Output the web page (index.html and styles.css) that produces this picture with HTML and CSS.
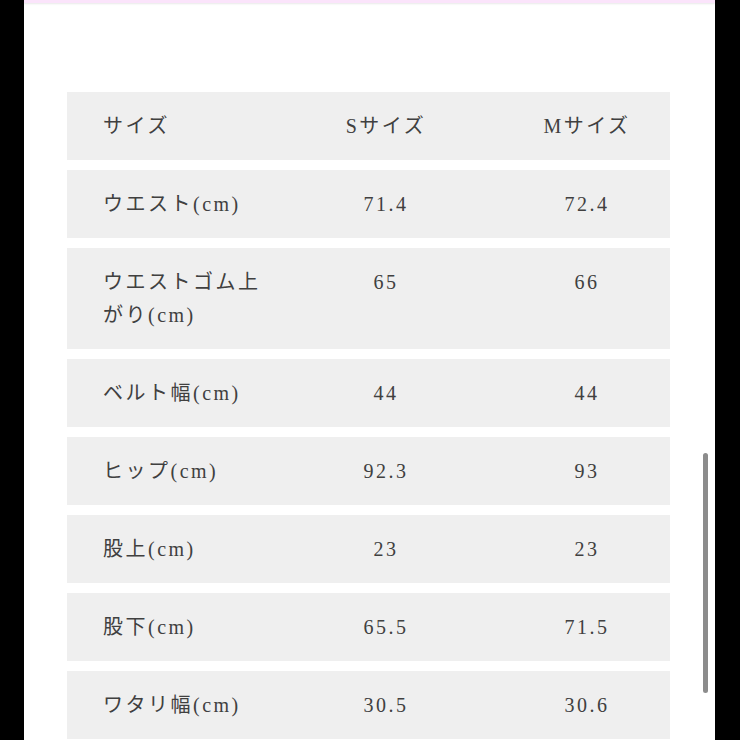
FILE: index.html
```html
<!DOCTYPE html>
<html lang="ja">
<head>
<meta charset="utf-8">
<link rel="stylesheet" href="styles.css">
</head>
<body>
<div class="screen">
  <div class="topline"></div>
  <div class="table">
    <div class="row"><div class="c1">サイズ</div><div class="c2">Sサイズ</div><div class="c3">Mサイズ</div></div>
    <div class="row"><div class="c1">ウエスト(cm)</div><div class="c2">71.4</div><div class="c3">72.4</div></div>
    <div class="row"><div class="c1">ウエストゴム上がり(cm)</div><div class="c2">65</div><div class="c3">66</div></div>
    <div class="row"><div class="c1">ベルト幅(cm)</div><div class="c2">44</div><div class="c3">44</div></div>
    <div class="row"><div class="c1">ヒップ(cm)</div><div class="c2">92.3</div><div class="c3">93</div></div>
    <div class="row"><div class="c1">股上(cm)</div><div class="c2">23</div><div class="c3">23</div></div>
    <div class="row"><div class="c1">股下(cm)</div><div class="c2">65.5</div><div class="c3">71.5</div></div>
    <div class="row"><div class="c1">ワタリ幅(cm)</div><div class="c2">30.5</div><div class="c3">30.6</div></div>
  </div>
  <div class="scrollbar"></div>
</div>
</body>
</html>
```

FILE: styles.css
```css
html, body {
  margin: 0;
  padding: 0;
  height: 740px;
  overflow: hidden;
  background: #000;
}
.screen {
  position: relative;
  margin: 0 25px 0 24px;
  height: 740px;
  background: #fff;
  overflow: hidden;
}
.topline {
  height: 3px;
  background: #fbe4fb;
  box-shadow: 0 1px 2px rgba(200, 200, 200, 0.4);
}
.table {
  display: flex;
  flex-direction: column;
  gap: 10px;
  margin: 89px 45px 0 43px;
}
.row {
  display: grid;
  grid-template-columns: 165px 236px 1fr;
  padding: 18px 0 17px 36px;
  background: #efefef;
  font-family: "Liberation Serif", "Noto Sans CJK JP", serif;
  font-size: 20px;
  line-height: 33px;
  letter-spacing: 2.5px;
  color: #404040;
}
.c2, .c3 {
  text-align: center;
}
.scrollbar {
  position: absolute;
  left: 679px;
  top: 453px;
  width: 5px;
  height: 240px;
  border-radius: 3px;
  background: #8c8c8c;
}
```
